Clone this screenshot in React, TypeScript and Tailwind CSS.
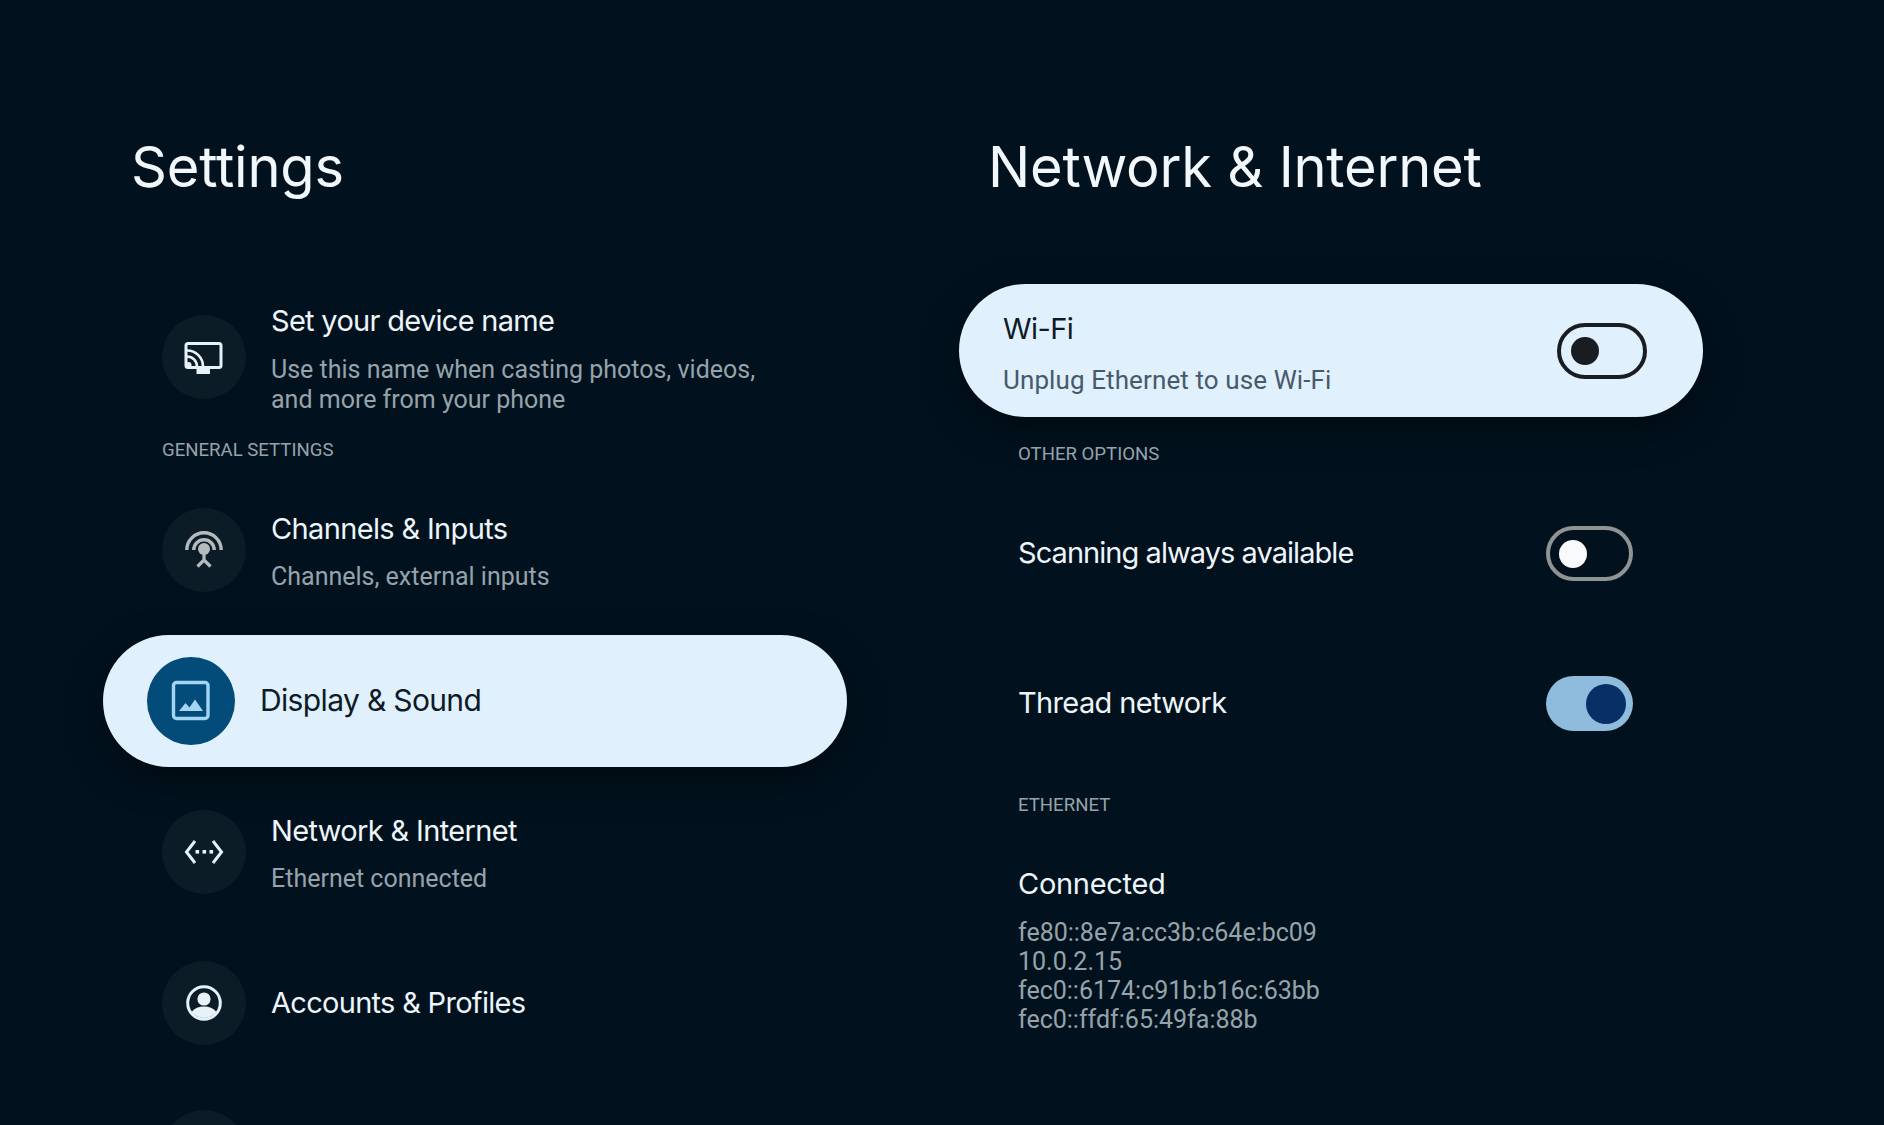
import React from 'react';

const heading = "font-['Inter',sans-serif]";
const body = "font-['Roboto',sans-serif]";

function CastIcon() {
  return (
    <svg width="46" height="46" viewBox="0 0 46 46" fill="none">
      <rect x="5" y="9.500" width="35" height="24" rx="2" stroke="#e6f1f8" strokeWidth="3" />
      <rect x="15.500" y="33" width="13.500" height="7" fill="#e6f1f8" />
      <path d="M6 16.500a16 16 0 0 1 16 16" stroke="#e6f1f8" strokeWidth="2.600" />
      <path d="M6 22.500a10 10 0 0 1 10 10" stroke="#e6f1f8" strokeWidth="2.600" />
      <circle cx="7.500" cy="31" r="3" fill="#e6f1f8" />
    </svg>
  );
}

function AntennaIcon() {
  return (
    <svg width="46" height="46" viewBox="0 0 46 46" fill="none" stroke="#b4babd">
      <path d="M5.800 23a17.200 17.200 0 0 1 34.400 0" strokeWidth="3.400" />
      <path d="M12.800 23a10.200 10.200 0 0 1 20.400 0" strokeWidth="3.400" />
      <circle cx="23" cy="22" r="6" fill="#b4babd" stroke="none" />
      <path d="M23 26v8M23 33l-6.500 6.500M23 33l6.500 6.500" strokeWidth="3.200" />
    </svg>
  );
}

function ImageIcon() {
  return (
    <svg width="46" height="46" viewBox="0 0 46 46" fill="none">
      <rect x="5.500" y="4.500" width="34.500" height="36" rx="3" stroke="#a5d5f5" strokeWidth="3.400" />
      <path d="M11 33l6.500-8 4 4.400 5.500-8 8 11.600z" fill="#a5d5f5" />
    </svg>
  );
}

function NetworkIcon() {
  return (
    <svg width="46" height="46" viewBox="0 0 46 46" fill="none">
      <path d="M14 12L5.500 23L14 34M32 12L40.500 23L32 34" stroke="#e6f1f8" strokeWidth="3" />
      <rect x="14.500" y="21" width="3.600" height="3.600" fill="#e6f1f8" />
      <rect x="21.500" y="21" width="3.600" height="3.600" fill="#e6f1f8" />
      <rect x="28.500" y="21" width="3.600" height="3.600" fill="#e6f1f8" />
    </svg>
  );
}

function AccountIcon() {
  return (
    <svg width="46" height="46" viewBox="0 0 46 46" fill="none">
      <circle cx="23" cy="23" r="16.300" stroke="#e6f1f8" strokeWidth="3" />
      <circle cx="23" cy="19" r="6.600" fill="#e6f1f8" />
      <path d="M10.500 32c3-3.800 7.500-5.500 12.500-5.500s9.500 1.700 12.500 5.500c-3 3.600-7.500 6-12.500 6s-9.500-2.400-12.500-6z" fill="#e6f1f8" />
    </svg>
  );
}

function IconCircle({ children }: { children?: React.ReactNode }) {
  return (
    <div className="flex h-[84px] w-[84px] shrink-0 items-center justify-center rounded-full bg-[#0b1c27]">
      {children}
    </div>
  );
}

function MenuRow({ icon, title, sub }: { icon: React.ReactNode; title: string; sub: string }) {
  return (
    <div className="ml-[59px] flex h-[84px] items-start">
      <IconCircle>{icon}</IconCircle>
      <div className="ml-[25px] pt-[4px]">
        <div className={`${heading} text-[29px] leading-[34px] tracking-[-0.65px] text-[#eef5fa]`}>{title}</div>
        <div className={`${body} mt-[16px] text-[25px] leading-[30px] text-[#97a3ab]`}>{sub}</div>
      </div>
    </div>
  );
}

function SectionLabel({ children }: { children: React.ReactNode }) {
  return <div className={`${body} text-[18.600px] leading-[22px] text-[#97a3ab] uppercase`}>{children}</div>;
}

export default function App() {
  return (
    <div className="flex h-[1125px] w-[1884px] overflow-hidden bg-[#01121e]">
      {/* Left menu */}
      <div className="w-[959px] shrink-0 pl-[103px] pt-[129px]">
        <h1 className={`${heading} ml-[28px] text-[56px] leading-[76px] font-normal tracking-[-0.2px] text-[#f2f7fb]`}>Settings</h1>

        <div className="ml-[59px] mt-[100px] flex h-[110px] items-start">
          <div className="mt-[10px]">
            <IconCircle>
              <CastIcon />
            </IconCircle>
          </div>
          <div className="ml-[25px] -mt-[1px]">
            <div className={`${heading} text-[29px] leading-[34px] tracking-[-0.7px] text-[#eef5fa]`}>Set your device name</div>
            <div className={`${body} mt-[17px] text-[25px] leading-[30px] text-[#97a3ab]`}>
              Use this name when casting photos, videos,
              <br />
              and more from your phone
            </div>
          </div>
        </div>

        <div className="ml-[59px] mt-[24px]">
          <SectionLabel>General Settings</SectionLabel>
        </div>

        <div className="mt-[47px]">
          <MenuRow icon={<AntennaIcon />} title="Channels & Inputs" sub="Channels, external inputs" />
        </div>

        <div className="mt-[43px] flex h-[132px] w-[744px] items-center rounded-full bg-[#e0f0fd] pl-[44px] shadow-[0_12px_36px_rgba(0,0,0,0.45)]">
          <div className="flex h-[88px] w-[88px] shrink-0 items-center justify-center rounded-full bg-[#034b79]">
            <ImageIcon />
          </div>
          <div className={`${heading} ml-[25px] pb-[2px] text-[30px] tracking-[-0.65px] text-[#0e1a24]`}>Display &amp; Sound</div>
        </div>

        <div className="mt-[43px]">
          <MenuRow icon={<NetworkIcon />} title="Network & Internet" sub="Ethernet connected" />
        </div>

        <div className="ml-[59px] mt-[67px] flex h-[84px] items-center">
          <IconCircle>
            <AccountIcon />
          </IconCircle>
          <div className={`${heading} ml-[25px] text-[29px] leading-[34px] tracking-[-0.7px] text-[#eef5fa]`}>Accounts &amp; Profiles</div>
        </div>

        <div className="ml-[59px] mt-[65px]">
          <IconCircle />
        </div>
      </div>

      {/* Right detail panel */}
      <div className="flex-1 pt-[129px]">
        <h2 className={`${heading} ml-[29px] text-[56px] leading-[76px] font-normal tracking-[-0.2px] text-[#f2f7fb]`}>Network &amp; Internet</h2>

        <div className="mt-[79px] flex h-[133px] w-[744px] items-center justify-between rounded-full bg-[#e0f0fd] pl-[44px] pr-[56px] shadow-[0_12px_36px_rgba(0,0,0,0.45)]">
          <div className="self-start pt-[28px]">
            <div className={`${heading} text-[29px] leading-[34px] tracking-[-0.6px] text-[#0e1a24]`}>Wi-Fi</div>
            <div className={`${body} mt-[19px] text-[26px] leading-[30px] tracking-[0.1px] text-[#47596a]`}>Unplug Ethernet to use Wi-Fi</div>
          </div>
          <div className="flex h-[56px] w-[90px] items-center rounded-full border-[4px] border-[#191c20] pl-[10px]">
            <div className="h-[28px] w-[28px] rounded-full bg-[#191c20]" />
          </div>
        </div>

        <div className="ml-[59px] mt-[26px]">
          <SectionLabel>Other Options</SectionLabel>
        </div>

        <div className="ml-[59px] mt-[61px] flex h-[55px] w-[615px] items-center justify-between">
          <div className={`${heading} pb-[2px] text-[29px] tracking-[-0.95px] text-[#eef5fa]`}>Scanning always available</div>
          <div className="flex h-[55px] w-[87px] items-center rounded-full border-[4px] border-[#8f9394] pl-[9px]">
            <div className="h-[28px] w-[28px] rounded-full bg-[#f8fafc]" />
          </div>
        </div>

        <div className="ml-[59px] mt-[95px] flex h-[55px] w-[615px] items-center justify-between">
          <div className={`${heading} pb-[2px] text-[29px] tracking-[-0.65px] text-[#eef5fa]`}>Thread network</div>
          <div className="flex h-[55px] w-[87px] items-center justify-end rounded-full bg-[#8fbbdc] pr-[7px]">
            <div className="h-[40px] w-[40px] rounded-full bg-[#082f66]" />
          </div>
        </div>

        <div className="ml-[59px] mt-[63px]">
          <SectionLabel>Ethernet</SectionLabel>
        </div>

        <div className={`${heading} ml-[59px] mt-[51px] text-[29px] leading-[34px] tracking-[-0.3px] text-[#eef5fa]`}>Connected</div>
        <div className={`${body} ml-[59px] mt-[17px] text-[25px] leading-[29px] text-[#97a3ab]`}>
          <div>fe80::8e7a:cc3b:c64e:bc09</div>
          <div>10.0.2.15</div>
          <div>fec0::6174:c91b:b16c:63bb</div>
          <div>fec0::ffdf:65:49fa:88b</div>
        </div>
      </div>
    </div>
  );
}
